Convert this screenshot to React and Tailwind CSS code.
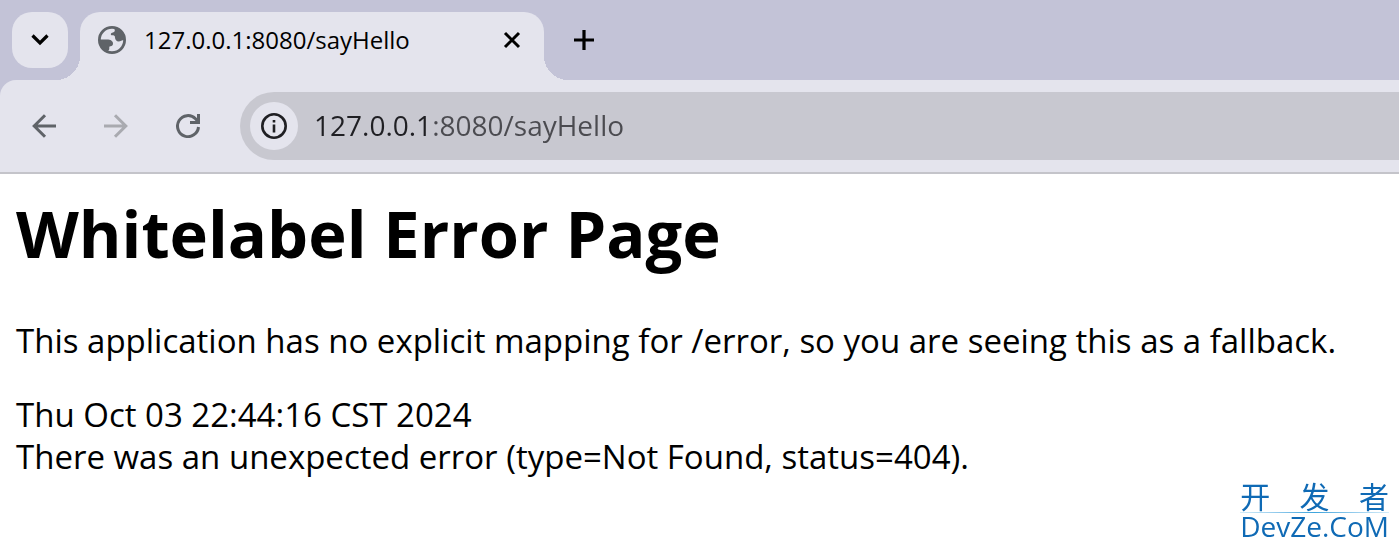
import { useState } from 'react';

const PAGE_URL = '127.0.0.1:8080/sayHello';

function GlobeIcon() {
	return (
		<svg viewBox="0 0 28 28" className="size-7 shrink-0" aria-hidden="true">
			<circle cx="14" cy="14" r="12.6" fill="none" stroke="#5f6368" strokeWidth="2.8" />
			<path
				d="M16.500 2C16 3 16.800 3.500 16.800 4.500C16.800 6.500 14.500 6 13 7.500C12.500 8.500 13 9.300 14.200 9.300C16 9.300 17 9.600 17 11.500C17 13.500 18.500 15.500 20.800 15.500C22.500 15.500 23.500 14 26.500 14C26.500 7 22 3 16.500 2Z"
				fill="#5f6368"
			/>
			<path
				d="M2 13.500H9C12.500 13.500 15 15 15 17.500C15 19.500 14 20.200 12.500 20.200C11 20.200 11.300 21 11.300 22.200C11.300 24 10.500 24.500 9.500 25.500C4.500 23.500 1.800 19 2 13.500Z"
				fill="#5f6368"
			/>
		</svg>
	);
}

function Icon({ d, className, width = 3 }) {
	return (
		<svg viewBox="0 0 24 24" className={className} fill="none" stroke="currentColor" strokeWidth={width} aria-hidden="true">
			<path d={d} />
		</svg>
	);
}

function TabStrip() {
	return (
		<div className="flex h-20 items-start bg-[#c3c3d7] pl-3 pt-3">
			<button aria-label="Search tabs" className="flex size-14 shrink-0 items-center justify-center rounded-[20px] bg-[#e4e4ed]">
				<Icon d="M4.500 7.500L12 15L19.500 7.500" className="size-6 text-black" width={3.2} />
			</button>
			<div className="relative ml-3 flex h-full w-[464px] items-start rounded-t-[20px] bg-[#e4e4ed] pl-[18px] pr-5">
				<span className="absolute -left-6 bottom-0 size-6 bg-[radial-gradient(circle_at_0_0,transparent_24px,#e4e4ed_24px)]" />
				<span className="absolute -right-6 bottom-0 size-6 bg-[radial-gradient(circle_at_100%_0,transparent_24px,#e4e4ed_24px)]" />
				<div className="flex h-14 w-full items-center">
					<GlobeIcon />
					<span className="ml-[18px] flex-1 font-['Open_Sans',sans-serif] text-[24px] leading-8 text-black">{PAGE_URL}</span>
					<button aria-label="Close tab" className="flex size-6 items-center justify-center">
						<Icon d="M5 5L19 19M19 5L5 19" className="size-6 text-black" />
					</button>
				</div>
			</div>
			<button aria-label="New tab" className="ml-7 flex h-14 w-6 items-center justify-center">
				<Icon d="M12 2V22M2 12H22" className="size-6 text-black" width={3.2} />
			</button>
		</div>
	);
}

function Toolbar() {
	const [url, setUrl] = useState(PAGE_URL);

	return (
		<div className="bg-[#c3c3d7]">
			<div className="flex items-center rounded-tl-2xl border-b-2 border-[#c4c4ca] bg-[#e4e4ed] py-3 pl-8">
				<div className="flex gap-12 text-[#5f6368]">
					<button aria-label="Back">
						<Icon d="M24 12H2.500M13 1.200L2.200 12L13 22.800" className="size-6" />
					</button>
					<button aria-label="Forward" disabled className="text-[#a9aab0]">
						<Icon d="M0 12H21.500M11 1.200L21.800 12L11 22.800" className="size-6" />
					</button>
					<button aria-label="Reload">
						<svg viewBox="0 0 24 24" className="size-6" fill="none" stroke="currentColor" strokeWidth="3" aria-hidden="true">
							<path d="M22.500 13A10.500 10.500 0 1 1 19.500 4.700L22.500 8M22.500 0V8.500H14" />
						</svg>
					</button>
				</div>
				<div className="ml-10 flex h-[68px] flex-1 items-center rounded-l-full bg-[#c8c8d0] pl-[10px]">
					<button aria-label="View site information" className="flex size-12 shrink-0 items-center justify-center rounded-full bg-[#e4e4ed] text-[#1f1f23]">
						<svg viewBox="0 0 26 26" className="size-[26px]" fill="none" stroke="currentColor" aria-hidden="true">
							<circle cx="13" cy="13" r="11.700" strokeWidth="2.600" />
							<path d="M13 11.500V19.500M13 7V9.600" strokeWidth="2.600" />
						</svg>
					</button>
					<input
						aria-label="Address"
						value={url}
						onChange={(e) => setUrl(e.target.value)}
						className="ml-4 min-w-0 flex-1 bg-linear-to-r from-[#1f1f23] from-[118px] to-[#4b4b50] to-[118px] bg-clip-text pb-0.5 font-['Open_Sans',sans-serif] text-[28px] leading-10 text-transparent caret-black outline-none"
					/>
				</div>
			</div>
		</div>
	);
}

function ErrorPage() {
	return (
		<main className="px-4 pt-4 font-['Open_Sans',sans-serif] text-[33px] leading-[42px] text-black">
			<h1 className="text-[65px] font-bold leading-[86px]">Whitelabel Error Page</h1>
			<p className="mt-11">This application has no explicit mapping for /error, so you are seeing this as a fallback.</p>
			<div className="mt-8">Thu Oct 03 22:44:16 CST 2024</div>
			<div>There was an unexpected error (type=Not Found, status=404).</div>
		</main>
	);
}

function Watermark() {
	return (
		<div className="fixed bottom-2 right-[10px] text-[#0f6ab5]">
			<div className="flex justify-between font-['Noto_Sans_CJK_SC',sans-serif] text-[30px] leading-[34px]">
				<span>开</span>
				<span>发</span>
				<span>者</span>
			</div>
			<div className="h-px bg-linear-to-r from-[#d5edf9] via-[#3ca4dc] to-[#d5edf9]" />
			<div className="font-['Open_Sans',sans-serif] text-[28px] leading-[26px]">DevZe.CoM</div>
		</div>
	);
}

export default function App() {
	return (
		<div className="min-h-screen bg-white">
			<TabStrip />
			<Toolbar />
			<ErrorPage />
			<Watermark />
		</div>
	);
}
